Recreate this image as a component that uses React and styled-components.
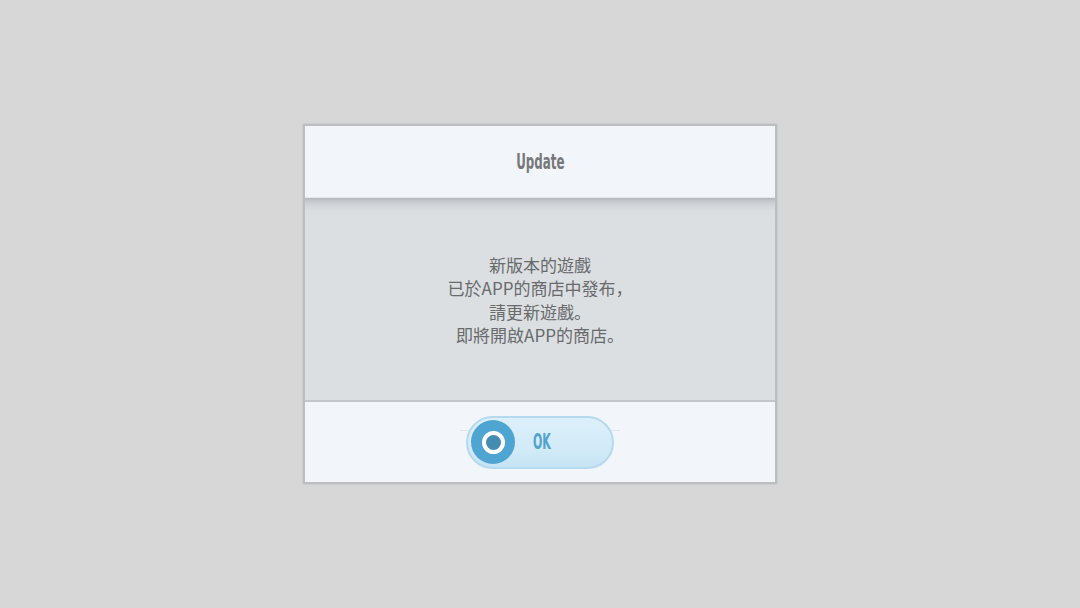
import React from "react";
import styled, { createGlobalStyle } from "styled-components";

const Global = createGlobalStyle`
  html, body { margin: 0; padding: 0; }
  body {
    background: #d7d7d7;
    font-family: "Noto Sans CJK JP", "Noto Sans", sans-serif;
  }
`;

const Screen = styled.div`
  width: 1080px;
  height: 608px;
  display: flex;
  align-items: center;
  justify-content: center;
`;

const Dialog = styled.div`
  width: 470px;
  height: 356px;
  border: 2px solid #bcbdc0;
  box-shadow: 0 0 2px rgba(0, 0, 0, 0.12);
  background: #f2f5fa;
  display: flex;
  flex-direction: column;
`;

const Header = styled.div`
  height: 71px;
  display: flex;
  align-items: center;
  justify-content: center;
  border-bottom: 1px solid #e3e6ea;
`;

const Title = styled.div`
  font-family: "DejaVu Sans Condensed", "DejaVu Sans", sans-serif;
  font-weight: bold;
  font-size: 22px;
  color: #767879;
  transform: scaleX(0.6);
`;

const Body = styled.div`
  height: 204px;
  background: linear-gradient(
    to bottom,
    #b4b7bb 0px,
    #c4c7cb 3px,
    #d2d5d8 7px,
    #dadde0 12px,
    #dcdfe2 20px,
    #dcdfe2 100%
  );
  border-bottom: 2px solid #c3c6ca;
  box-sizing: border-box;
  display: flex;
  align-items: center;
  justify-content: center;
`;

const Message = styled.div`
  text-align: center;
  font-family: "Noto Sans CJK JP", "Noto Sans", sans-serif;
  font-size: 17px;
  line-height: 23.5px;
  color: #686a6c;
  margin-top: 1px;
`;

const Footer = styled.div`
  flex: 1;
  display: flex;
  align-items: center;
  justify-content: center;
`;

const ButtonWrap = styled.div`
  position: relative;
  display: flex;
  align-items: center;
`;

/* faint highlight strokes either side of the pill */
const Glow = styled.span`
  position: absolute;
  top: 14px;
  width: 16px;
  height: 1px;
  background: #e2e5ea;
  ${(p) => (p.$side === "left" ? "left: -6px;" : "right: -6px;")}
`;

const OkButton = styled.button`
  position: relative;
  width: 148px;
  height: 53px;
  border-radius: 27px;
  border: 2px solid #b5d9ee;
  background: linear-gradient(to bottom, #dcf0fb 0%, #d3ebf8 60%, #c6e4f5 100%);
  box-sizing: border-box;
  padding: 0 0 0 3px;
  display: flex;
  align-items: center;
  cursor: pointer;
`;

const Circle = styled.span`
  width: 44px;
  height: 44px;
  border-radius: 50%;
  background: #4ea5d1;
  display: flex;
  align-items: center;
  justify-content: center;
`;

const Ring = styled.span`
  width: 15px;
  height: 15px;
  border-radius: 50%;
  border: 4px solid #ffffff;
  background: #458cb2;
`;

const Label = styled.span`
  display: inline-block;
  font-family: "DejaVu Sans Condensed", "DejaVu Sans", sans-serif;
  font-weight: bold;
  font-size: 21px;
  color: #52a3cd;
  transform: scaleX(0.58);
  transform-origin: left center;
  margin-left: 18px;
`;

export default function App() {
  return (
    <>
      <Global />
      <Screen>
        <Dialog>
          <Header>
            <Title>Update</Title>
          </Header>
          <Body>
            <Message>
              新版本的遊戲
              <br />
              已於APP的商店中發布，
              <br />
              請更新遊戲。
              <br />
              即將開啟APP的商店。
            </Message>
          </Body>
          <Footer>
            <ButtonWrap>
              <Glow $side="left" />
              <Glow $side="right" />
              <OkButton>
                <Circle>
                  <Ring />
                </Circle>
                <Label>OK</Label>
              </OkButton>
            </ButtonWrap>
          </Footer>
        </Dialog>
      </Screen>
    </>
  );
}
